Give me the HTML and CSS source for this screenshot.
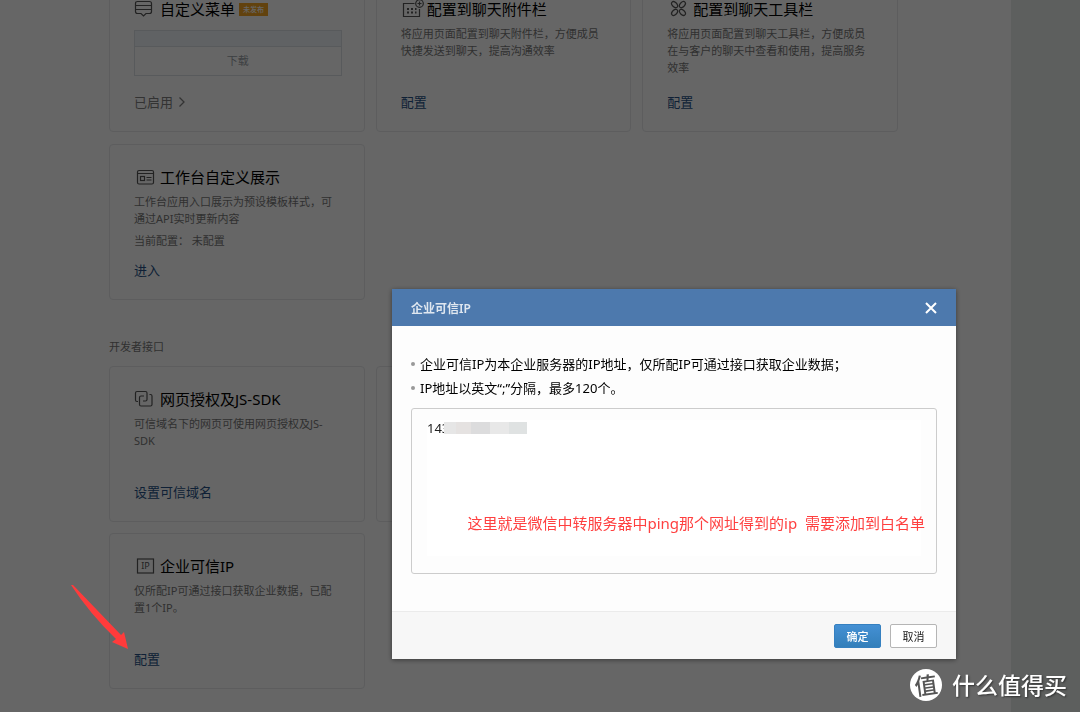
FILE: index.html
```html
<!DOCTYPE html>
<html lang="zh-CN">
<head>
<meta charset="utf-8">
<title>企业可信IP</title>
<link rel="stylesheet" href="styles.css">
</head>
<body>
<div class="page">
  <main class="content">
    <section class="cards">
      <article class="card">
        <h3 class="card-title">
          <svg class="icon" viewBox="0 0 22 20"><path d="M3 2.500H15.500Q17.500 2.500 17.500 4.500V12.500Q17.500 14.500 15.500 14.500H12L9.500 17L7 14.500H3.500Q1.500 14.500 1.500 12.500V4.500Q1.500 2.500 3.500 2.500M1.500 6.500H17.500M1.500 10.500H17.500"/></svg>
          自定义菜单<span class="badge">未发布</span>
        </h3>
        <div class="preview"><div class="preview-bar"></div><div class="preview-label">下载</div></div>
        <a class="card-link muted" href="#">已启用
          <svg class="chevron" viewBox="0 0 8 12"><path d="M1.500 1.500L6 6L1.500 10.500"/></svg></a>
      </article>
      <article class="card">
        <h3 class="card-title">
          <svg class="icon" viewBox="0 0 22 20"><path d="M13.500 4.500H2.500V17.500H18.500V10"/><circle cx="18.500" cy="4.500" r="3.800"/><path d="M16.500 4.500H20.500M18.500 2.500V6.500"/><path class="dots" d="M6 10H15.500M6 13.500H15.500"/></svg>
          配置到聊天附件栏
        </h3>
        <p class="desc">将应用页面配置到聊天附件栏，方便成员<br>快捷发送到聊天，提高沟通效率</p>
        <a class="card-link" href="#">配置</a>
      </article>
      <article class="card">
        <h3 class="card-title">
          <svg class="icon" viewBox="0 0 22 20"><g transform="translate(11.500 9.500)"><ellipse cx="0" cy="-5.500" rx="2.300" ry="3.600" transform="rotate(45)"/><ellipse cx="0" cy="-5.500" rx="2.300" ry="3.600" transform="rotate(135)"/><ellipse cx="0" cy="-5.500" rx="2.300" ry="3.600" transform="rotate(225)"/><ellipse cx="0" cy="-5.500" rx="2.300" ry="3.600" transform="rotate(315)"/></g></svg>
          配置到聊天工具栏
        </h3>
        <p class="desc">将应用页面配置到聊天工具栏，方便成员<br>在与客户的聊天中查看和使用，提高服务<br>效率</p>
        <a class="card-link" href="#">配置</a>
      </article>
      <article class="card">
        <h3 class="card-title">
          <svg class="icon" viewBox="0 0 22 20"><rect x="3.500" y="3.500" width="16" height="13.500" rx="1.500"/><path d="M3.500 6.500H19.500M12.500 10.500H17.500M12.500 13H17.500"/><rect x="6.500" y="9.500" width="4" height="4"/></svg>
          工作台自定义展示
        </h3>
        <p class="desc">工作台应用入口展示为预设模板样式，可<br>通过API实时更新内容</p>
        <p class="desc">当前配置： 未配置</p>
        <a class="card-link" href="#">进入</a>
      </article>
    </section>

    <h2 class="section-title">开发者接口</h2>
    <section class="cards tight">
      <article class="card">
        <h3 class="card-title">
          <svg class="icon" viewBox="0 0 22 20"><path d="M4 12.500H3Q1.500 12.500 1.500 11V4Q1.500 2.500 3 2.500H11.500Q13 2.500 13 4V10.500Q13 12 11.500 12H9"/><path d="M15.500 5.500H16.500Q18 5.500 18 7V15.500Q18 17 16.500 17H7Q5.500 17 5.500 15.500V8.500Q5.500 7 7 7H10"/></svg>
          网页授权及JS-SDK
        </h3>
        <p class="desc">可信域名下的网页可使用网页授权及JS-<br>SDK</p>
        <a class="card-link" href="#">设置可信域名</a>
      </article>
      <article class="card"></article>
      <article class="card"></article>
      <article class="card">
        <h3 class="card-title">
          <svg class="icon" viewBox="0 0 22 20"><rect x="3.500" y="3" width="16" height="14"/><text class="icon-text" x="11.500" y="13">IP</text></svg>
          企业可信IP
        </h3>
        <p class="desc">仅所配IP可通过接口获取企业数据，已配<br>置1个IP。</p>
        <a class="card-link" href="#">配置</a>
      </article>
    </section>
  </main>
</div>

<div class="overlay"></div>

<svg class="arrow" viewBox="0 0 60 66"><path d="M0 0L2 0L50 50L53 47L57 64L41 57L45 54Q19 29 0 0Z"/></svg>

<div class="dialog" role="dialog" aria-labelledby="dialog-title">
  <header class="dialog-head">
    <h1 class="dialog-title" id="dialog-title">企业可信IP</h1>
    <button class="close" type="button" aria-label="关闭"><svg class="close-icon" viewBox="0 0 12 12"><path d="M1 1L11 11M11 1L1 11"/></svg></button>
  </header>
  <div class="dialog-body">
    <ul class="tips">
      <li>企业可信IP为本企业服务器的IP地址，仅所配IP可通过接口获取企业数据；</li>
      <li>IP地址以英文“;”分隔，最多120个。</li>
    </ul>
    <div class="field">
      <textarea class="ip-input" aria-label="企业可信IP">143</textarea>
      <div class="mosaic"></div>
      <p class="note">这里就是微信中转服务器中ping那个网址得到的ip&nbsp; 需要添加到白名单</p>
    </div>
  </div>
  <footer class="dialog-foot">
    <button class="btn primary" type="button">确定</button>
    <button class="btn" type="button">取消</button>
  </footer>
</div>

<div class="watermark"><span class="watermark-logo"><span class="watermark-char">值</span></span>什么值得买</div>
</body>
</html>
```

FILE: styles.css
```css
* { box-sizing: border-box; }

body {
  margin: 0;
  min-height: 100vh;
  overflow: hidden;
  background: #e8eeeb;
  color: #000;
  font-family: "Noto Sans", "Noto Sans CJK SC", sans-serif;
  font-size: 13px;
}

h1, h2, h3, p, ul { margin: 0; padding: 0; font-weight: 400; }
a { text-decoration: none; }
button, textarea { font-family: inherit; }

.page { height: 100vh; overflow: hidden; padding-right: 69px; }

/* The list is scrolled a little way down, so the first row is cut. */
.content {
  margin-top: -24px;
  min-height: calc(100vh + 24px);
  padding: 0 113px 22px 109px;
  background: #fff;
}

.cards {
  display: grid;
  grid-template-columns: repeat(3, 1fr);
  gap: 12px 11px;
}
.tight { row-gap: 11px; }

.card {
  display: flex;
  flex-direction: column;
  min-height: 156px;
  padding: 21px 22px 19px 24px;
  border: 1px solid #e8e9eb;
  border-radius: 4px;
}

.card-title {
  display: flex;
  align-items: center;
  gap: 4px;
  font-size: 15px;
  line-height: 22px;
  white-space: nowrap;
}

.icon {
  flex: none;
  width: 22px;
  height: 20px;
  overflow: visible;
  fill: none;
  stroke: #555;
  stroke-width: 1.2;
}
.dots { stroke-width: 2; stroke-dasharray: 2 2; }
.icon-text { fill: #555; stroke: none; font-size: 9px; text-anchor: middle; }

.badge {
  padding: 0 4px;
  background: #f5a623;
  color: #fff;
  font-size: 7px;
  font-weight: 500;
  line-height: 13px;
}

.preview {
  margin-top: 10px;
  border: 1px solid #dde1e6;
  color: #9a9fa6;
  font-size: 11px;
  text-align: center;
}
.preview-bar { height: 16px; border-bottom: 1px solid #dde1e6; background: #f0f4f9; }
.preview-label { line-height: 28px; }

.desc {
  margin-top: 5px;
  color: #787878;
  font-size: 11px;
  line-height: 17px;
  white-space: nowrap;
}

.card-link {
  margin-top: auto;
  color: #265287;
  line-height: 20px;
}
.muted { display: flex; align-items: center; gap: 5px; color: #808080; }
.chevron { width: 8px; height: 12px; fill: none; stroke: #808080; stroke-width: 1.3; }

.section-title {
  margin: 38px 0 10px;
  color: #787878;
  font-size: 11px;
  line-height: 18px;
}

.overlay { position: fixed; inset: 0; background: rgba(0, 0, 0, .6); }

.arrow {
  position: fixed;
  left: 71px;
  top: 585px;
  width: 60px;
  height: 66px;
  fill: #ff3b3b;
}

.dialog {
  position: fixed;
  left: 392px;
  top: 289px;
  width: 564px;
  background: #fdfdfd;
  box-shadow: 0 1px 5px rgba(0, 0, 0, .45);
}

.dialog-head {
  display: flex;
  align-items: center;
  justify-content: space-between;
  height: 37px;
  padding: 0 19px;
  background: #4d79ad;
}
.dialog-title { color: #dfe7f0; font-size: 12px; font-weight: 600; }
.close { display: flex; padding: 0; border: 0; background: none; }
.close-icon { width: 12px; height: 12px; stroke: #fff; stroke-width: 2; }

.dialog-body { padding: 26px 19px 37px; }

.tips { margin-bottom: 8px; list-style: none; line-height: 24px; white-space: nowrap; }
.tips li { display: flex; align-items: center; gap: 5px; }
.tips li::before { content: ""; width: 4px; height: 4px; border-radius: 50%; background: #999; }

.field { position: relative; }
.ip-input {
  display: block;
  width: 100%;
  height: 166px;
  padding: 11px 15px 17px;
  border: 1px solid #ccc;
  border-radius: 3px;
  outline: 0;
  background: #fdfdfd linear-gradient(#fff, #fff) no-repeat content-box;
  color: #222;
  font-size: 13px;
  line-height: 17px;
  resize: none;
}
.mosaic {
  position: absolute;
  left: 33px;
  top: 14px;
  width: 83px;
  height: 12px;
  background: linear-gradient(90deg, #e6e6e6 0 12px, #e5e2e1 12px 27px, #dcdcdd 27px 46px, #e8e8e8 46px 65px, #dfe2e2 65px);
}
.note {
  position: absolute;
  right: 12px;
  bottom: 40px;
  color: #ff4040;
  font-size: 15px;
  line-height: 22px;
  white-space: nowrap;
}

.dialog-foot {
  display: flex;
  justify-content: flex-end;
  gap: 9px;
  padding: 12px 19px 11px;
  border-top: 1px solid #ebebeb;
  background: #f7f7f7;
}
.btn {
  width: 47px;
  height: 24px;
  padding: 0;
  border: 1px solid #b5b5b5;
  border-radius: 2px;
  background: #fff;
  color: #222;
  font-size: 11px;
}
.primary {
  border-color: #3580c0;
  background: linear-gradient(#4490d4, #337fba);
  color: #fff;
  font-weight: 500;
}

.watermark {
  position: fixed;
  right: 13px;
  bottom: 11px;
  display: flex;
  align-items: center;
  gap: 10px;
  color: #fff;
  font-size: 23px;
  font-weight: 500;
  line-height: 32px;
  text-shadow: 1px 1px 2px rgba(0, 0, 0, .5);
}
.watermark-logo {
  width: 32px;
  height: 32px;
  border-radius: 50%;
  background: #fff;
  color: #555;
  text-align: center;
  text-shadow: none;
}
.watermark-char { display: block; transform: rotate(-8deg); }
```
